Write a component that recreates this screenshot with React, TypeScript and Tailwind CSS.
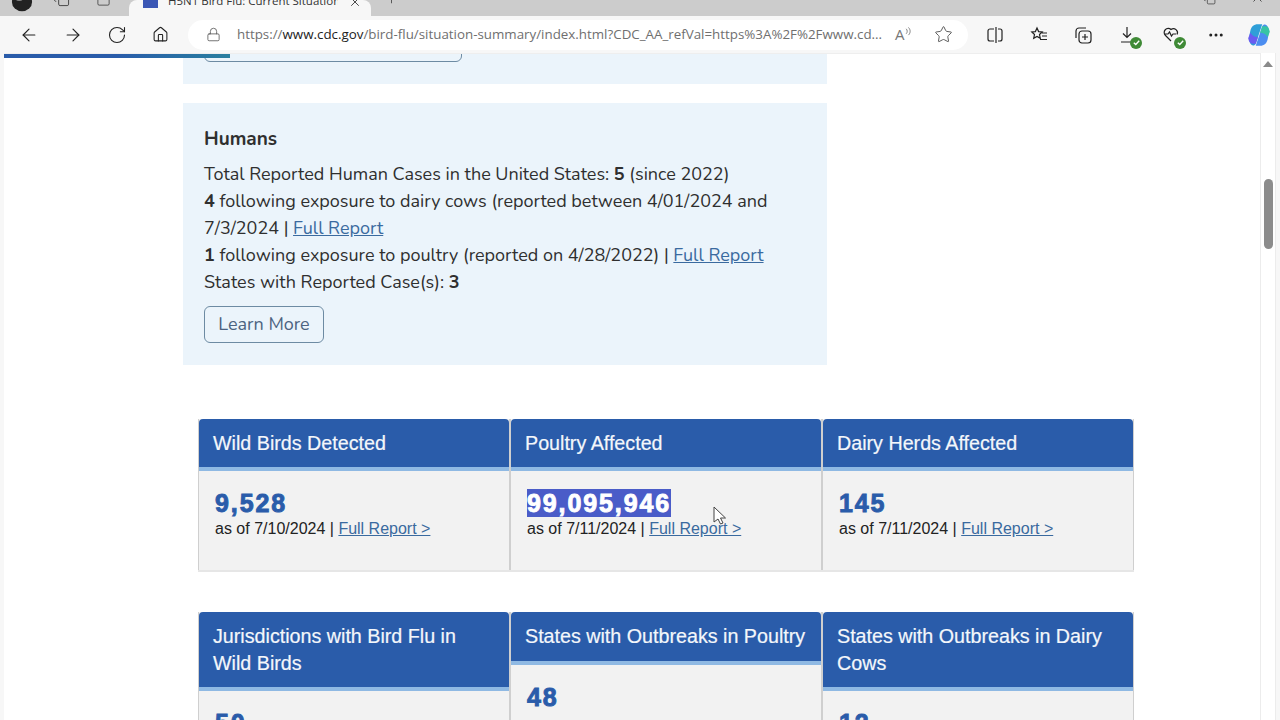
import { ArrowLeft, ArrowRight, Copy, Ellipsis, Home, Lock, Plus, RotateCw, Square, Star, X } from "lucide-react";

const pageFont = "font-['Nunito','Lato','Noto_Sans',sans-serif]";
const tableFont = "font-['Liberation_Sans',Arial,sans-serif]";

const Badge = () => (
    <span className="absolute -right-[5px] -bottom-[5px] flex h-[12px] w-[12px] items-center justify-center rounded-full bg-[#3f8a36]">
        <svg viewBox="0 0 10 10" className="h-[9px] w-[9px]" fill="none" stroke="white" strokeWidth="1.5">
            <path d="M2 5.2 4.2 7.2 8 3" />
        </svg>
    </span>
);

const Toolbar = () => (
    <div className="flex h-[37px] shrink-0 items-center bg-[#f7f7f7] text-[#222]">
        <div className="flex w-[188px] shrink-0 items-center pl-[19px] gap-[24px]">
            <ArrowLeft size={20} strokeWidth={1.4} />
            <ArrowRight size={20} strokeWidth={1.4} />
            <RotateCw size={20} strokeWidth={1.3} />
            <Home size={17} strokeWidth={1.5} className="ml-[1px]" />
        </div>
        <div className="flex h-[30px] w-[780px] shrink-0 items-center rounded-full bg-white pl-[18px]">
            <Lock size={15} strokeWidth={1.3} className="text-[#555]" />
            <span className="ml-[16px] w-[646px] shrink-0 font-['Open_Sans',sans-serif] text-[13.35px] whitespace-nowrap text-[#6f6f6f]">
                https://<span className="text-[#222]">www.cdc.gov</span>/bird-flu/situation-summary/index.html?CDC_AA_refVal=https%3A%2F%2Fwww.cd...
            </span>
            <span className="ml-[12px] flex items-center font-['Open_Sans',sans-serif] text-[15px] leading-none text-[#777]">
                A
                <svg viewBox="0 0 6 10" className="-mt-[7px] h-[9px] w-[6px]" fill="none" stroke="#777" strokeWidth="1">
                    <path d="M1 2c1.500 1.500 1.500 4 0 5.500M3.500 .5c2.500 2.500 2.500 6 0 8.500" />
                </svg>
            </span>
            <Star size={19} strokeWidth={1.2} className="ml-[23px] text-[#555]" />
        </div>
        <div className="ml-[18px] flex items-center gap-[26px]">
            <svg viewBox="0 0 18 18" className="h-[18px] w-[18px]" fill="none" stroke="#222" strokeWidth="1.2">
                <path d="M8 3H4a2 2 0 0 0-2 2v8a2 2 0 0 0 2 2h4M10 1v16M12 3h2a2 2 0 0 1 2 2v8a2 2 0 0 1-2 2h-2" />
            </svg>
            <svg viewBox="0 0 18 18" className="h-[18px] w-[18px]" fill="none" stroke="#222" strokeWidth="1.2">
                <path d="m7 2 1.6 3.6 3.6.4-2.7 2.5.8 3.8L7 10.4l-3.3 1.900.8-3.800L1.800 6l3.600-.4zM12 7h5M12 10h5M10 13.500h7" />
            </svg>
            <svg viewBox="0 0 18 18" className="h-[18px] w-[18px]" fill="none" stroke="#222" strokeWidth="1.2">
                <rect x="5" y="5" width="12" height="12" rx="3" />
                <path d="M11 8v6M8 11h6M12 2H5a3 3 0 0 0-3 3v7" />
            </svg>
            <span className="relative ml-[1px]">
                <svg viewBox="0 0 18 18" className="h-[18px] w-[18px]" fill="none" stroke="#222" strokeWidth="1.2">
                    <path d="M8 1v10M4 7.500l4 4 4-4M2 16h10" />
                </svg>
                <Badge />
            </span>
            <span className="relative">
                <svg viewBox="0 0 18 18" className="h-[18px] w-[18px]" fill="none" stroke="#222" strokeWidth="1.2">
                    <path d="M8 15 2.500 9.500a4 4 0 0 1 5.500-6 4 4 0 0 1 6 5M1 8h4l1.500-2 2 4 1.500-2h3" />
                </svg>
                <Badge />
            </span>
            <Ellipsis size={18} strokeWidth={2} />
        </div>
        <svg viewBox="0 0 24 24" className="ml-[21px] h-[26px] w-[26px]">
            <path d="M4 8c1-4 3-6 7-6h4L9 20c-.8 2-3 2-4 1-3-3-2-8-1-13z" fill="#2f9fd8" />
            <path d="M20 16c-1 4-3 6-7 6H9l6-18c.8-2 3-2 4-1 3 3 2 8 1 13z" fill="#4b8df0" />
            <path d="M15 4h3c2 0 3 1 4 5l-2 5c-2-3-4-4-7-4z" fill="#37c4a5" />
            <path d="M9 20H6c-2 0-3-1-4-5l2-5c2 3 4 4 7 4z" fill="#6a5cf0" />
        </svg>
    </div>
);

const TabStrip = () => (
    <div className="flex h-[16px] shrink-0 items-end overflow-hidden bg-[#cccccc] text-[#333]">
        <svg viewBox="0 0 24 24" className="ml-[11px] h-[22px] w-[22px] shrink-0 -translate-y-[3px]">
            <ellipse cx="12" cy="12" rx="11" ry="10" fill="#222" />
            <ellipse cx="9" cy="8" rx="4" ry="3" fill="#888" />
        </svg>
        <Copy size={17} strokeWidth={1.2} className="ml-[20px] shrink-0 -translate-y-[9px]" />
        <Square size={15} strokeWidth={1.2} className="ml-[26px] shrink-0 -translate-y-[9px]" />
        <div className="ml-[18px] flex h-[16px] w-[242px] shrink-0 items-center rounded-t-lg bg-[#f7f7f7] pl-[14px]">
            <span className="h-[14px] w-[15px] shrink-0 -translate-y-[7px] bg-[#3b57b5]" />
            <span className="ml-[10px] w-[170px] shrink-0 -translate-y-[7px] overflow-hidden font-['Open_Sans',sans-serif] text-[11.5px] whitespace-nowrap text-[#333]">
                H5N1 Bird Flu: Current Situation
            </span>
            <X size={14} strokeWidth={1.5} className="ml-[10px] shrink-0 -translate-y-[6px]" />
        </div>
        <Plus size={15} strokeWidth={1.2} className="ml-[13px] shrink-0 -translate-y-[10px]" />
        <div className="flex-1" />
        <Copy size={13} strokeWidth={1.3} className="mr-[34px] shrink-0 -translate-y-[11px]" />
        <X size={15} strokeWidth={1.3} className="mr-[15px] shrink-0 -translate-y-[11px]" />
    </div>
);

const Scrollbar = () => (
    <div className="flex w-[16px] shrink-0 flex-col items-center border-x border-[#ececec] bg-white pt-[8px]">
        <span className="h-0 w-0 border-x-[5px] border-b-[6px] border-x-transparent border-b-[#8a8a8a]" />
        <span className="mt-[112px] h-[70px] w-[9px] rounded-full bg-[#8c8c8c]" />
    </div>
);

const Rep = () => <a className="text-[#3a6a9f] underline">Full Report</a>;

const Panels = () => (
    <div className={`ml-[179px] w-[644px] text-[18px] leading-[27px] text-[#2f2f2f] ${pageFont}`}>
        <div className="h-[30px] overflow-hidden bg-[#ebf4fb] pl-[21px]">
            <div className="-mt-[31px] h-[39px] w-[258px] rounded-md border border-[#6d8ba3]" />
        </div>
        <div className="mt-[19px] h-[262px] bg-[#ebf4fb] pl-[21px] pt-[22px]">
            <h2 className="mt-[1px] text-[19px] font-bold leading-[27px]">Humans</h2>
            <p className="mt-[8px]">Total Reported Human Cases in the United States: <b>5</b> (since 2022)</p>
            <p><b>4</b> following exposure to dairy cows (reported between 4/01/2024 and</p>
            <p>7/3/2024 | <Rep /></p>
            <p><b>1</b> following exposure to poultry (reported on 4/28/2022) | <Rep /></p>
            <p>States with Reported Case(s): <b>3</b></p>
            <button className="mt-[10px] h-[37px] w-[120px] rounded-md border border-[#6d8ba3] text-[#4c6380]">Learn More</button>
        </div>
    </div>
);

type Stat = { title: string; value?: string; date?: string; selected?: boolean };

const StatCell = ({ title, value, date, selected }: Stat) => (
    <div className="flex flex-col border-x border-[#cfcfcf] bg-[#f2f2f2]">
        <div className="rounded-t-sm border-b-4 border-[#8fb9e3] bg-[#2a5caa] px-[14px] py-[11px] text-[19.7px] leading-[26.4px] text-[#f4f7fb] [-webkit-text-stroke:0.2px_#f4f7fb]">
            {title}
        </div>
        <div className="h-[99px] px-[16px] pt-[18px] text-[16px] leading-[24px] text-[#222]">
            <div className="text-[25px] font-bold leading-[28px] tracking-[1.9px] text-[#2a5caa] [-webkit-text-stroke:0.9px_#2a5caa]">
                {selected ? (
                    <span className="bg-[#4a5cc8] text-white [-webkit-text-stroke:0.9px_white]">{value}</span>
                ) : (
                    value
                )}
            </div>
            {date && (
                <div>
                    as of {date} | <a className="text-[#3a6a9f] underline">Full Report &gt;</a>
                </div>
            )}
        </div>
    </div>
);

const rowOne: Stat[] = [
    { title: "Wild Birds Detected", value: "9,528", date: "7/10/2024" },
    { title: "Poultry Affected", value: "99,095,946", date: "7/11/2024", selected: true },
    { title: "Dairy Herds Affected", value: "145", date: "7/11/2024" },
];

const rowTwo: Stat[] = [
    { title: "Jurisdictions with Bird Flu in Wild Birds", value: "50" },
    { title: "States with Outbreaks in Poultry", value: "48" },
    { title: "States with Outbreaks in Dairy Cows", value: "12" },
];

const StatRow = ({ cells }: { cells: Stat[] }) => (
    <div className={`grid w-[936px] grid-cols-3 border-b-2 border-[#e6e6e6] ${tableFont}`}>
        {cells.map((c) => (
            <StatCell key={c.title} {...c} />
        ))}
    </div>
);

const App = () => {
    return (
        <div className="flex h-[720px] w-[1280px] flex-col overflow-hidden bg-white">
            <TabStrip />
            <Toolbar />
            <div className="flex min-h-0 flex-1">
                <div className="w-[4px] shrink-0 bg-[#f7f7f7]" />
                <main className="relative min-w-0 flex-1 overflow-hidden bg-white border-t border-[#eeeeee]">
                    {/* reading progress bar */}
                    <div className="absolute left-0 top-0 h-[4px] w-[226px] bg-gradient-to-r from-[#2a5caa] via-[#2a5caa] to-[#2a7f9f]" />
                    <Panels />
                    <div className="ml-[194px] mt-[54px] flex flex-col gap-[40px]">
                        <StatRow cells={rowOne} />
                        <StatRow cells={rowTwo} />
                    </div>
                    {/* mouse pointer */}
                    <svg viewBox="0 0 14 20" className="absolute left-[709px] top-[452px] h-[20px] w-[14px]" fill="white" stroke="#444" strokeWidth="1">
                        <path d="M1 1v15l4-3 2.500 5 2.500-1-2.500-5h5z" />
                    </svg>
                </main>
                <Scrollbar />
                <div className="w-[4px] shrink-0 bg-[#f7f7f7]" />
            </div>
        </div>
    );
};

export default App;
